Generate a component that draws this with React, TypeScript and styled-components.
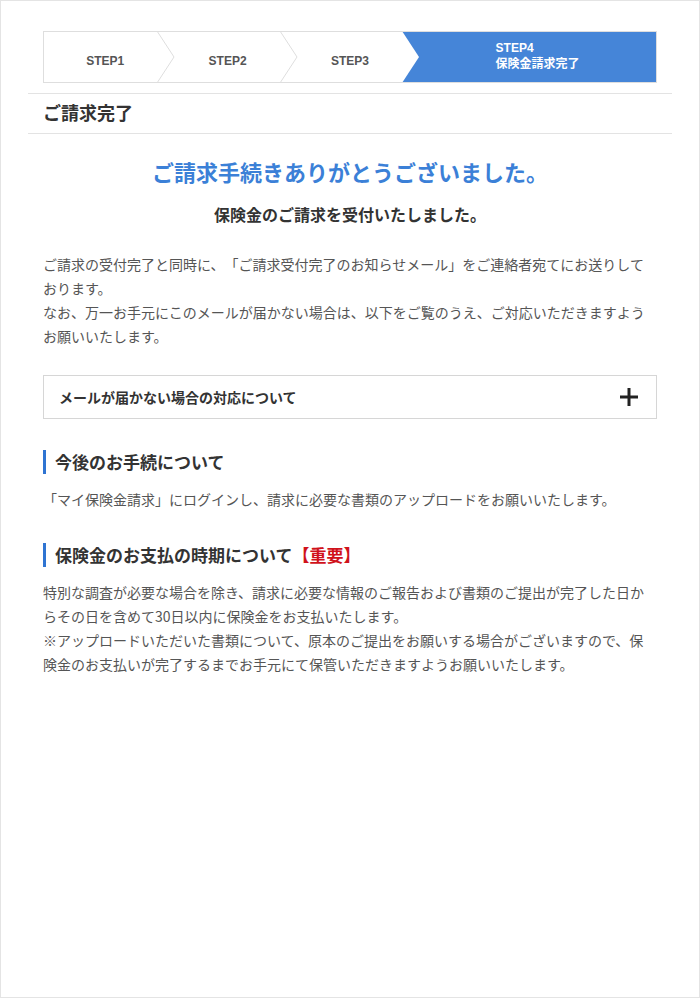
import styled, { createGlobalStyle } from "styled-components";

const GlobalStyle = createGlobalStyle`
  html, body {
    margin: 0;
    padding: 0;
    background: #fff;
  }
  body {
    font-family: "Noto Sans CJK JP", "Noto Sans", sans-serif;
    color: #333;
    text-spacing-trim: space-all;
  }
  * {
    box-sizing: border-box;
  }
`;

const colors = {
  blue: "#4585d8",
  title: "#3b80d7",
  bar: "#2f74d2",
  text: "#555",
  dark: "#333",
  line: "#e3e3e3",
  red: "#d0121b"
};

const Page = styled.div`
  min-height: 100vh;
  border: 1px solid #e4e4e4;
  padding: 30px 27px 40px;
`;

const Stepper = styled.ol`
  display: flex;
  list-style: none;
  margin: 0 15px;
  padding: 0;
  height: 52px;
  border: 1px solid #dedede;
  overflow: hidden;
`;

const Step = styled.li<{ $active?: boolean; $wide?: boolean }>`
  position: relative;
  flex: ${p => (p.$wide ? "0 0 40%" : "0 0 20%")};
  display: flex;
  align-items: center;
  justify-content: center;
  padding-top: ${p => (p.$active ? 0 : 8)}px;
  background: ${p => (p.$active ? colors.blue : "#fff")};
  color: ${p => (p.$active ? "#fff" : colors.text)};
  font-family: "Liberation Sans", "Noto Sans CJK JP", sans-serif;
  font-weight: 700;
  font-size: 12px;
  line-height: 16px;

  ${p =>
    p.$active &&
    `
    &::before {
      content: "";
      position: absolute;
      top: 0;
      bottom: 0;
      left: -9px;
      width: 9px;
      background: ${colors.blue};
    }
  `}
`;

const StepLabel = styled.span`
  display: block;
  position: relative;
  z-index: 1;
`;

const ActiveLabel = styled.span`
  display: flex;
  flex-direction: column;
  align-items: flex-start;
  margin-left: 8px;
  margin-top: -2px;
`;

const Chevron = styled.svg`
  position: absolute;
  top: 0;
  right: -9px;
  width: 18px;
  height: 100%;
  z-index: 2;
  overflow: visible;
`;

const StepArrow = ({ edge }: { edge: boolean }) => (
  <Chevron viewBox="0 0 18 50" preserveAspectRatio="none">
    <polygon points="0,-1 17,25 0,51" fill="#fff" />
    {edge && (
      <polyline points="0,-1 17,25 0,51" fill="none" stroke="#dedede" strokeWidth="1" />
    )}
  </Chevron>
);

const SectionBar = styled.h1`
  margin: 10px 0 0;
  height: 41px;
  border-top: 1px solid ${colors.line};
  border-bottom: 1px solid ${colors.line};
  display: flex;
  align-items: center;
  padding: 0 0 4px 15px;
  font-size: 18px;
  font-weight: 700;
  color: ${colors.dark};
  line-height: 1;
`;

const Content = styled.div`
  padding: 0 15px;
`;

const Thanks = styled.h2`
  margin: 21px 0 0;
  text-align: center;
  font-size: 22px;
  line-height: 32px;
  font-weight: 700;
  color: ${colors.title};
`;

const Received = styled.p`
  margin: 15px 0 0;
  text-align: center;
  font-size: 16px;
  line-height: 24px;
  font-weight: 700;
  color: ${colors.dark};
`;

const Body = styled.p<{ $gap?: number }>`
  margin: ${p => p.$gap ?? 13}px 0 0;
  font-size: 14px;
  line-height: 24px;
  color: ${colors.text};
`;

const Accordion = styled.button`
  margin-top: 27px;
  width: 100%;
  height: 44px;
  display: flex;
  align-items: center;
  justify-content: space-between;
  padding: 0 18px 0 15px;
  background: #fff;
  border: 1px solid #d6d6d6;
  font-family: inherit;
  font-size: 14px;
  font-weight: 700;
  color: ${colors.dark};
  cursor: pointer;
`;

const PlusIcon = () => (
  <svg width="18" height="18" viewBox="0 0 18 18" aria-hidden="true">
    <rect x="7.5" y="0" width="3" height="18" fill="#222" />
    <rect x="0" y="7.5" width="18" height="3" fill="#222" />
  </svg>
);

const Heading = styled.h3<{ $gap: number }>`
  margin: ${p => p.$gap}px 0 0;
  padding-left: 9px;
  border-left: 3px solid ${colors.bar};
  font-size: 17px;
  line-height: 24px;
  font-weight: 700;
  color: ${colors.dark};
`;

const Important = styled.span`
  color: ${colors.red};
`;

export default function App() {
  return (
    <>
      <GlobalStyle />
      <Page>
        <Stepper>
          <Step>
            <StepLabel>STEP1</StepLabel>
            <StepArrow edge />
          </Step>
          <Step>
            <StepLabel>STEP2</StepLabel>
            <StepArrow edge />
          </Step>
          <Step>
            <StepLabel>STEP3</StepLabel>
            <StepArrow edge={false} />
          </Step>
          <Step $active $wide>
            <ActiveLabel>
              <span>STEP4</span>
              <span>保険金請求完了</span>
            </ActiveLabel>
          </Step>
        </Stepper>

        <SectionBar>ご請求完了</SectionBar>

        <Content>
          <Thanks>ご請求手続きありがとうございました。</Thanks>
          <Received>保険金のご請求を受付いたしました。</Received>

          <Body $gap={26}>
            ご請求の受付完了と同時に、「ご請求受付完了のお知らせメール」をご連絡者宛てにお送りしております。
            <br />
            なお、万一お手元にこのメールが届かない場合は、以下をご覧のうえ、ご対応いただきますようお願いいたします。
          </Body>

          <Accordion type="button">
            <span>メールが届かない場合の対応について</span>
            <PlusIcon />
          </Accordion>

          <Heading $gap={31}>今後のお手続について</Heading>
          <Body>「マイ保険金請求」にログインし、請求に必要な書類のアップロードをお願いいたします。</Body>

          <Heading $gap={32}>
            保険金のお支払の時期について<Important>【重要】</Important>
          </Heading>
          <Body>
            特別な調査が必要な場合を除き、請求に必要な情報のご報告および書類のご提出が完了した日からその日を含めて30日以内に保険金をお支払いたします。
            <br />
            ※アップロードいただいた書類について、原本のご提出をお願いする場合がございますので、保険金のお支払いが完了するまでお手元にて保管いただきますようお願いいたします。
          </Body>
        </Content>
      </Page>
    </>
  );
}
